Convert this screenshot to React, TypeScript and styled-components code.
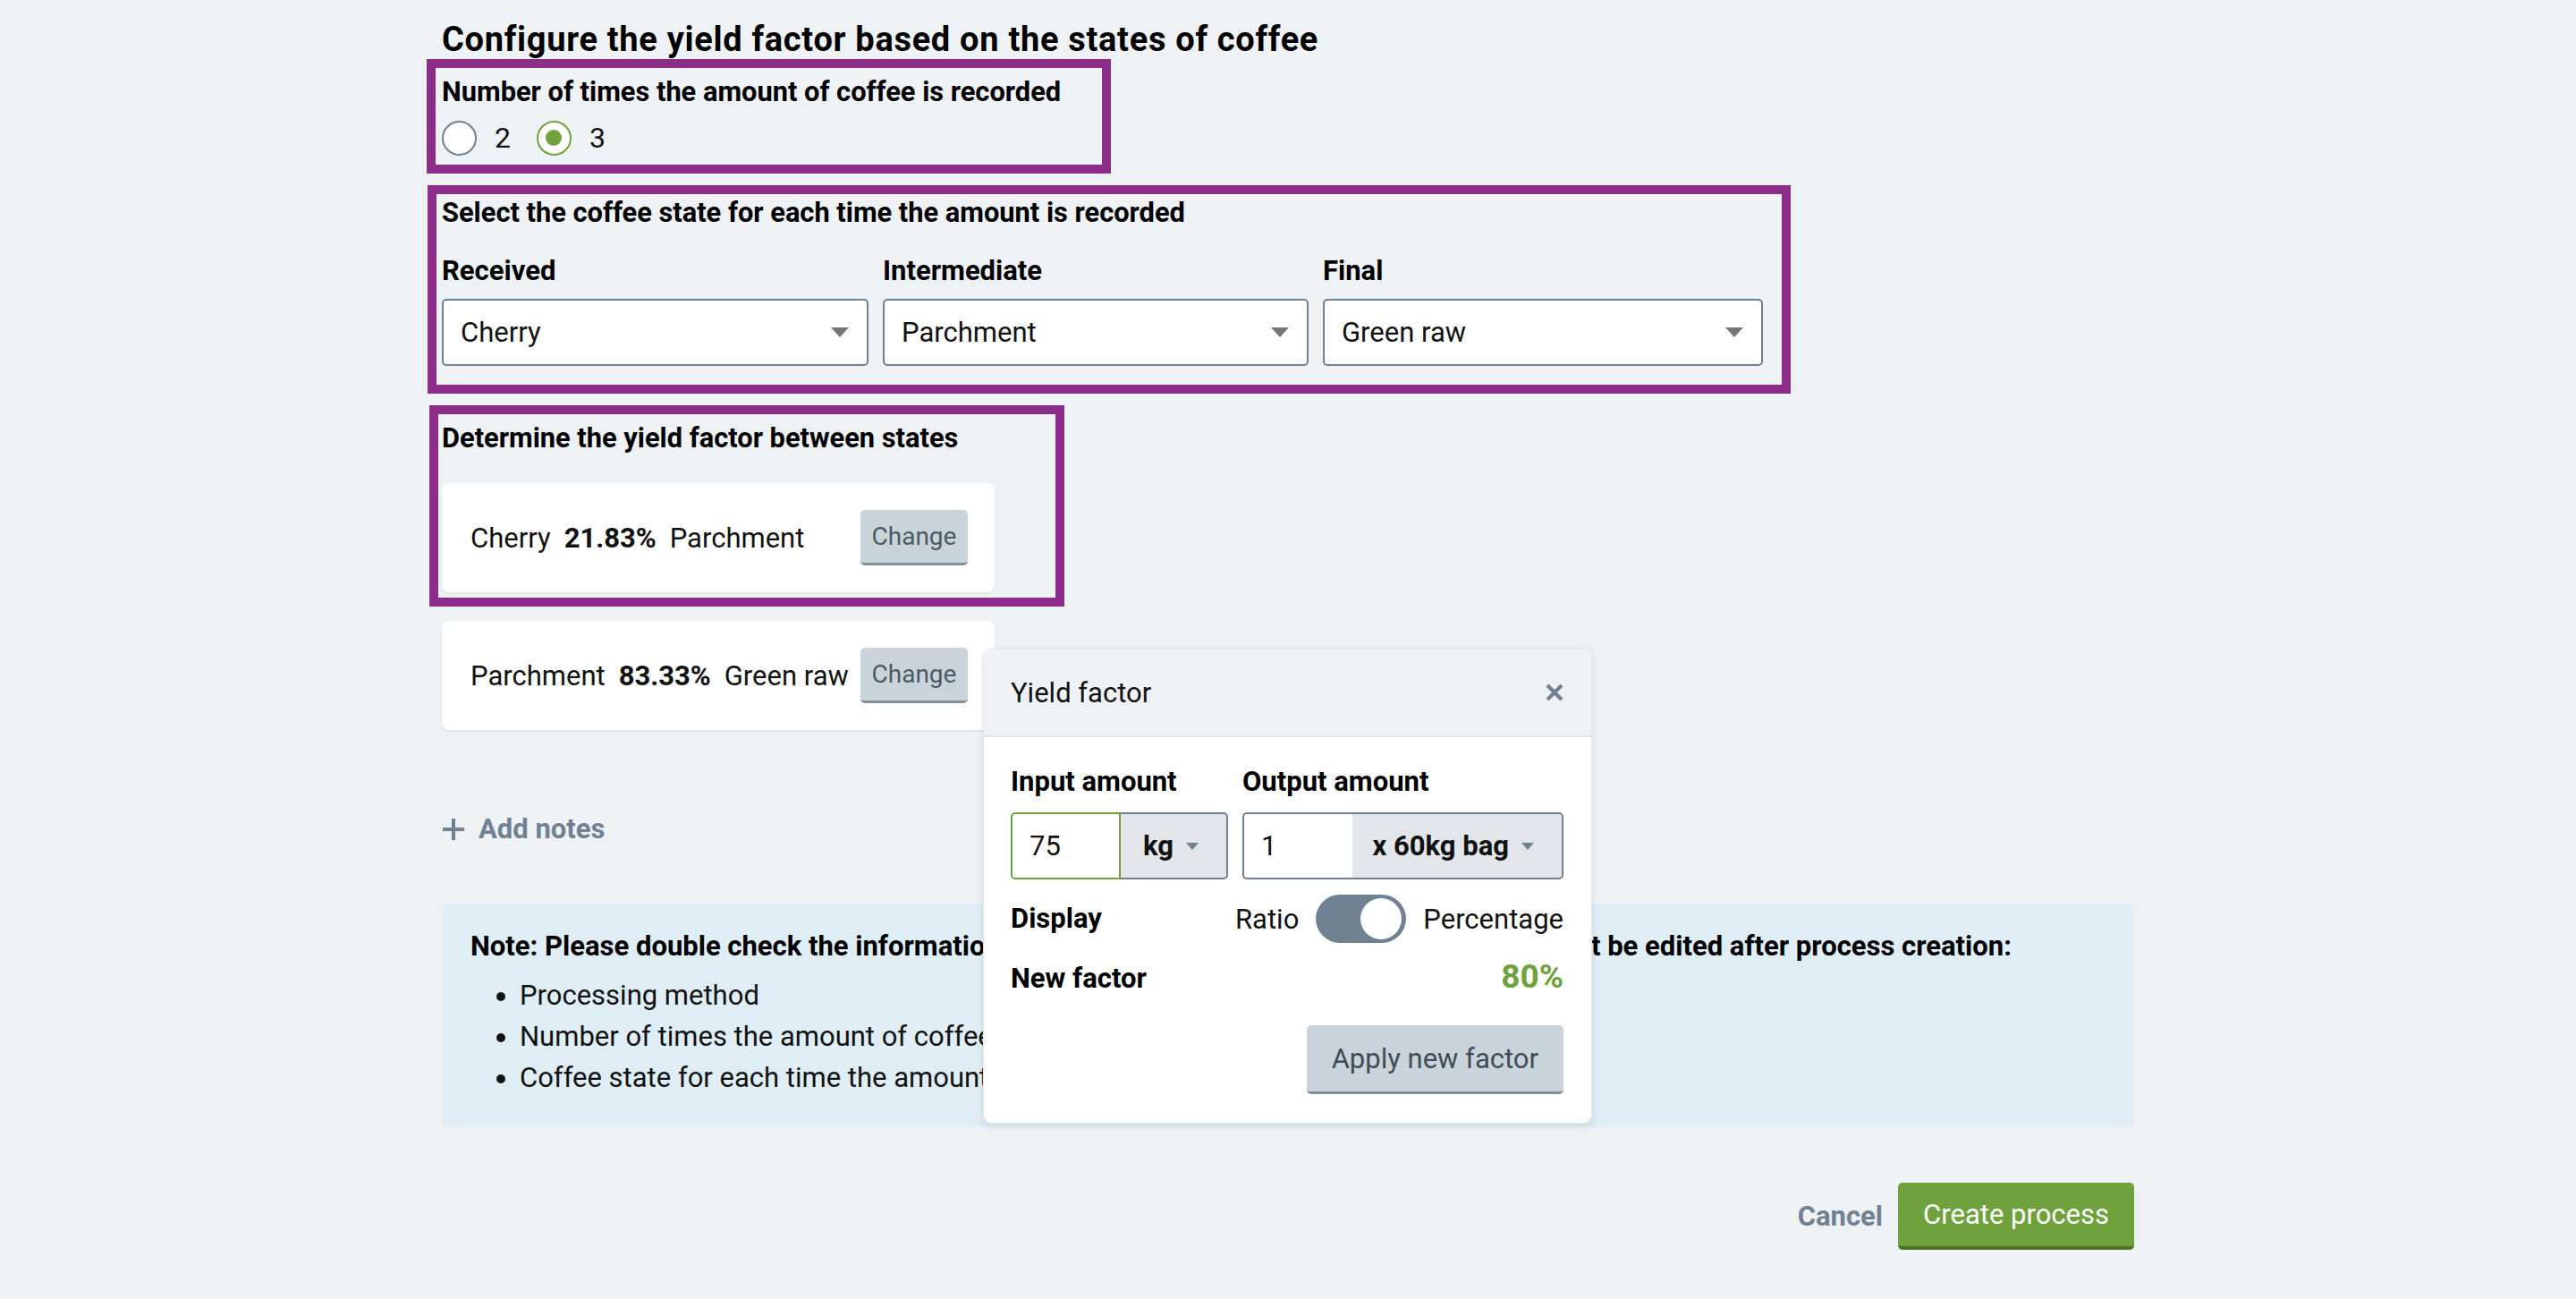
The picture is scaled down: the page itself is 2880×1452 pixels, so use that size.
import React from "react";
import styled, { createGlobalStyle } from "styled-components";

const GlobalStyle = createGlobalStyle`
  html, body { margin: 0; padding: 0; }
  body {
    background: #eef2f4;
    font-family: Roboto, "Liberation Sans", Arial, sans-serif;
    color: #111;
  }
  * { box-sizing: border-box; }
`;

const Page = styled.div`
  width: 100%;
  min-height: 1452px;
  background: #eef2f4;
`;

const Column = styled.div`
  position: relative;
  width: 1892px;
  margin: 0 auto;
  padding-top: 22px;
  display: flex;
  flex-direction: column;
  align-items: flex-start;
`;

const Title = styled.h1`
  margin: 0;
  font-size: 38px;
  letter-spacing: 0.7px;
  line-height: 44px;
  font-weight: 700;
  color: #000;
`;

const Highlight = styled.section<{
  $width: number;
  $inset: number;
  $pt: number;
  $pb: number;
  $mt: number;
}>`
  width: ${(p) => p.$width}px;
  margin: ${(p) => p.$mt}px 0 0 ${(p) => -(10 + p.$inset)}px;
  padding: ${(p) => p.$pt}px ${(p) => p.$inset}px ${(p) => p.$pb}px;
  border: 10px solid #8b2d89;
  display: flex;
  flex-direction: column;
  align-items: flex-start;
`;

const SectionHeading = styled.h2`
  margin: 0;
  font-size: 30.8px;
  line-height: 36px;
  font-weight: 700;
  color: #000;
`;

const RadioGroup = styled.div`
  display: flex;
  align-items: center;
  gap: 29px;
  height: 40px;
  margin-top: 13px;
`;

const RadioOption = styled.label`
  display: flex;
  align-items: center;
  gap: 20px;
  font-size: 32px;
  line-height: 40px;
  color: #111;
`;

const RadioCircle = styled.span<{ $checked?: boolean }>`
  width: 39px;
  height: 39px;
  border-radius: 50%;
  background: #fff;
  border: 2px solid ${(p) => (p.$checked ? "#6fa13c" : "#6f8193")};
  display: flex;
  align-items: center;
  justify-content: center;
  &::after {
    content: "";
    width: 18px;
    height: 18px;
    border-radius: 50%;
    background: #6fa13c;
    display: ${(p) => (p.$checked ? "block" : "none")};
  }
`;

const StateGrid = styled.div`
  display: grid;
  grid-template-columns: 477px 476px 492px;
  column-gap: 16px;
  margin-top: 29px;
`;

const Field = styled.div`
  display: flex;
  flex-direction: column;
  gap: 13px;
`;

const FieldLabel = styled.div`
  font-size: 31px;
  line-height: 36px;
  font-weight: 700;
  color: #000;
`;

const SelectBox = styled.div`
  height: 75px;
  background: #fff;
  border: 2px solid #6f8193;
  border-radius: 5px;
  display: flex;
  align-items: center;
  justify-content: space-between;
  padding: 0 20px 0 19px;
  font-size: 31px;
  color: #111;
`;

const Caret = styled.span<{ $w: number; $h: number; $color: string }>`
  width: 0;
  height: 0;
  flex: none;
  border-left: ${(p) => p.$w / 2}px solid transparent;
  border-right: ${(p) => p.$w / 2}px solid transparent;
  border-top: ${(p) => p.$h}px solid ${(p) => p.$color};
`;

const FactorCard = styled.div<{ $mt: number }>`
  width: 618px;
  height: 122px;
  margin-top: ${(p) => p.$mt}px;
  background: #fff;
  border-radius: 8px;
  box-shadow: 0 2px 3px rgba(0, 0, 0, 0.06);
  display: flex;
  align-items: center;
  justify-content: space-between;
  padding: 0 30px 0 32px;
  font-size: 31px;
  color: #111;
`;

const FactorText = styled.div`
  display: flex;
  align-items: baseline;
  gap: 15px;
  white-space: nowrap;
`;

const Percent = styled.strong`
  font-weight: 700;
`;

const ChangeButton = styled.button`
  width: 120px;
  height: 62px;
  flex: none;
  background: #c9d4da;
  border: none;
  border-bottom: 3px solid #7f8f9c;
  border-radius: 5px;
  font-family: Roboto, "Liberation Sans", Arial, sans-serif;
  font-size: 28px;
  color: #4b5a66;
  padding: 0;
`;

const AddNotes = styled.div`
  display: flex;
  align-items: center;
  gap: 15px;
  margin-top: 93px;
  font-size: 31px;
  line-height: 36px;
  font-weight: 700;
  color: #6f8193;
`;

const NoteBox = styled.div`
  width: 100%;
  margin-top: 65px;
  background: #dfedf4;
  border-radius: 8px;
  padding: 30px 32px 32px;
`;

const NoteHeading = styled.div`
  font-size: 31px;
  line-height: 36px;
  font-weight: 700;
  color: #000;
`;

const NoteList = styled.ul`
  margin: 14px 0 0;
  padding-left: 55px;
  font-size: 31px;
  line-height: 46px;
  color: #111;
`;

const Actions = styled.div`
  width: 100%;
  margin-top: 62px;
  display: flex;
  justify-content: flex-end;
  align-items: center;
  gap: 17px;
`;

const CancelLink = styled.span`
  font-size: 31px;
  font-weight: 700;
  color: #6f8193;
`;

const PrimaryButton = styled.button`
  height: 75px;
  padding: 0 28px;
  background: #6fa13c;
  border: none;
  border-bottom: 4px solid #4d7326;
  border-radius: 5px;
  color: #fff;
  font-family: Roboto, "Liberation Sans", Arial, sans-serif;
  font-size: 31px;
`;

const Popover = styled.div`
  position: absolute;
  left: 605px;
  top: 725px;
  width: 681px;
  background: #fff;
  border: 1px solid #e2e7ea;
  border-radius: 10px;
  box-shadow: 0 3px 10px rgba(0, 0, 0, 0.1);
  overflow: hidden;
`;

const PopHeader = styled.div`
  height: 98px;
  background: #eef2f4;
  border-bottom: 2px solid #dfe5e9;
  display: flex;
  align-items: center;
  justify-content: space-between;
  padding: 0 31px 0 30px;
  font-size: 31px;
  color: #111;
`;

const PopBody = styled.div`
  padding: 32px 31px 32px 30px;
  display: flex;
  flex-direction: column;
`;

const AmountGrid = styled.div`
  display: grid;
  grid-template-columns: 243px 1fr;
  column-gap: 16px;
  row-gap: 16px;
`;

const PopLabel = styled.div`
  font-size: 31px;
  line-height: 36px;
  font-weight: 700;
  color: #000;
  white-space: nowrap;
`;

const InputGroup = styled.div`
  display: flex;
  height: 75px;
`;

const AmountInput = styled.div<{ $focused?: boolean }>`
  width: 123px;
  flex: none;
  background: #fff;
  border: 2px solid ${(p) => (p.$focused ? "#6fa13c" : "#6f8193")};
  border-right: ${(p) => (p.$focused ? "2px solid #6fa13c" : "none")};
  border-radius: 5px 0 0 5px;
  display: flex;
  align-items: center;
  padding-left: 19px;
  font-size: 31px;
  color: #111;
`;

const UnitSelect = styled.div`
  flex: 1;
  min-width: 0;
  background: #e2e6ea;
  border: 2px solid #6f8193;
  border-left: none;
  border-radius: 0 5px 5px 0;
  display: flex;
  align-items: center;
  justify-content: flex-end;
  gap: 14px;
  padding: 0 31px 0 16px;
  font-size: 31px;
  font-weight: 700;
  color: #111;
  white-space: nowrap;
`;

const DisplayRow = styled.div`
  margin-top: 17px;
  height: 54px;
  display: flex;
  align-items: center;
`;

const ToggleGroup = styled.div`
  margin-left: auto;
  display: flex;
  align-items: center;
  gap: 19px;
  font-size: 31px;
  color: #111;
`;

const ToggleTrack = styled.span`
  width: 101px;
  height: 54px;
  border-radius: 27px;
  background: #6f8193;
  display: flex;
  align-items: center;
  justify-content: flex-end;
  padding: 0 5px;
`;

const ToggleKnob = styled.span`
  width: 46px;
  height: 46px;
  border-radius: 50%;
  background: #fff;
`;

const FactorRow = styled.div`
  margin-top: 16px;
  height: 44px;
  display: flex;
  align-items: baseline;
  justify-content: space-between;
`;

const FactorValue = styled.span`
  font-size: 37px;
  line-height: 44px;
  font-weight: 700;
  color: #6fa13c;
`;

const ApplyButton = styled.button`
  margin-top: 32px;
  align-self: flex-end;
  height: 77px;
  padding: 0 28px;
  background: #c9d4da;
  border: none;
  border-bottom: 3px solid #7f8f9c;
  border-radius: 5px;
  font-family: Roboto, "Liberation Sans", Arial, sans-serif;
  font-size: 31px;
  color: #3f4b55;
`;

const CloseIcon = () => (
  <svg width="20" height="20" viewBox="0 0 20 20">
    <path d="M2 2 L18 18 M18 2 L2 18" stroke="#6f8193" strokeWidth="4.2" strokeLinecap="butt" />
  </svg>
);

const PlusIcon = () => (
  <svg width="26" height="26" viewBox="0 0 26 26">
    <path d="M13 1 V25 M1 13 H25" stroke="#6f8193" strokeWidth="4" />
  </svg>
);

const states = [
  { label: "Received", value: "Cherry" },
  { label: "Intermediate", value: "Parchment" },
  { label: "Final", value: "Green raw" },
];

export default function App() {
  return (
    <Page>
      <GlobalStyle />
      <Column>
        <Title>Configure the yield factor based on the states of coffee</Title>

        <Highlight $width={765} $inset={7} $pt={9} $pb={10} $mt={0}>
          <SectionHeading>Number of times the amount of coffee is recorded</SectionHeading>
          <RadioGroup>
            <RadioOption>
              <RadioCircle />
              2
            </RadioOption>
            <RadioOption>
              <RadioCircle $checked />
              3
            </RadioOption>
          </RadioGroup>
        </Highlight>

        <Highlight $width={1524} $inset={6} $pt={3} $pb={21} $mt={13}>
          <SectionHeading>Select the coffee state for each time the amount is recorded</SectionHeading>
          <StateGrid>
            {states.map((s) => (
              <Field key={s.label}>
                <FieldLabel>{s.label}</FieldLabel>
                <SelectBox>
                  {s.value}
                  <Caret $w={20} $h={11} $color="#767676" />
                </SelectBox>
              </Field>
            ))}
          </StateGrid>
        </Highlight>

        <Highlight $width={710} $inset={4} $pt={9} $pb={6} $mt={13}>
          <SectionHeading>Determine the yield factor between states</SectionHeading>
          <FactorCard $mt={32}>
            <FactorText>
              <span>Cherry</span>
              <Percent>21.83%</Percent>
              <span>Parchment</span>
            </FactorText>
            <ChangeButton>Change</ChangeButton>
          </FactorCard>
        </Highlight>

        <FactorCard $mt={16}>
          <FactorText>
            <span>Parchment</span>
            <Percent>83.33%</Percent>
            <span>Green raw</span>
          </FactorText>
          <ChangeButton>Change</ChangeButton>
        </FactorCard>

        <AddNotes>
          <PlusIcon />
          Add notes
        </AddNotes>

        <NoteBox>
          <NoteHeading>
            Note: Please double check the information before continuing as the following fields cannot be edited after process creation:
          </NoteHeading>
          <NoteList>
            <li>Processing method</li>
            <li>Number of times the amount of coffee is recorded</li>
            <li>Coffee state for each time the amount is recorded</li>
          </NoteList>
        </NoteBox>

        <Actions>
          <CancelLink>Cancel</CancelLink>
          <PrimaryButton>Create process</PrimaryButton>
        </Actions>

        <Popover>
          <PopHeader>
            Yield factor
            <CloseIcon />
          </PopHeader>
          <PopBody>
            <AmountGrid>
              <PopLabel>Input amount</PopLabel>
              <PopLabel>Output amount</PopLabel>
              <InputGroup>
                <AmountInput $focused>75</AmountInput>
                <UnitSelect>
                  kg
                  <Caret $w={14} $h={8} $color="#6f8193" />
                </UnitSelect>
              </InputGroup>
              <InputGroup>
                <AmountInput>1</AmountInput>
                <UnitSelect>
                  x 60kg bag
                  <Caret $w={14} $h={8} $color="#6f8193" />
                </UnitSelect>
              </InputGroup>
            </AmountGrid>
            <DisplayRow>
              <PopLabel>Display</PopLabel>
              <ToggleGroup>
                Ratio
                <ToggleTrack>
                  <ToggleKnob />
                </ToggleTrack>
                Percentage
              </ToggleGroup>
            </DisplayRow>
            <FactorRow>
              <PopLabel>New factor</PopLabel>
              <FactorValue>80%</FactorValue>
            </FactorRow>
            <ApplyButton>Apply new factor</ApplyButton>
          </PopBody>
        </Popover>
      </Column>
    </Page>
  );
}
